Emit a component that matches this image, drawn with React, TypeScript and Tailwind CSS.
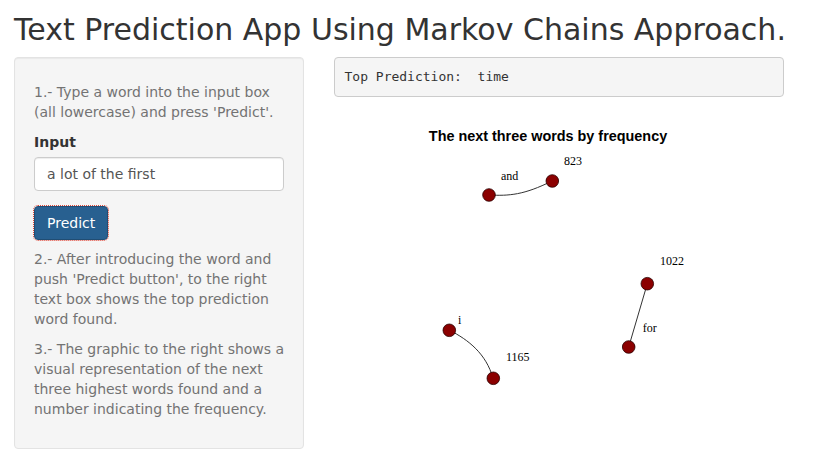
import React from 'react';

const STEPS = {
  one: "1.- Type a word into the input box (all lowercase) and press 'Predict'.",
  two: "2.- After introducing the word and push 'Predict button', to the right text box shows the top prediction word found.",
  three: '3.- The graphic to the right shows a visual representation of the next three highest words found and a number indicating the frequency.',
};

function Node({ x, y }: { x: number; y: number }) {
  return <circle cx={x} cy={y} r={6.3} fill="#8b0000" stroke="#2a0000" strokeWidth={0.8} />;
}

function Label({ x, y, children }: { x: number; y: number; children: React.ReactNode }) {
  return (
    <text x={x} y={y} fontSize={12} fill="#000" style={{ fontFamily: '"Liberation Serif", serif' }}>
      {children}
    </text>
  );
}

// word graph, drawn as the plot image
function FreqPlot() {
  return (
    <svg width={450} height={400} viewBox="0 0 450 400" className="block">
      <text
        x={214}
        y={34}
        textAnchor="middle"
        fontSize={14.4}
        fontWeight={700}
        fill="#000"
        style={{ fontFamily: '"Liberation Sans", Arial, sans-serif' }}
      >
        The next three words by frequency
      </text>

      <g fill="none" stroke="#333" strokeWidth={1}>
        <path d="M155,88 C175,89 190,88 218,74" />
        <path d="M313.3,176.7 L294.7,240" />
        <path d="M115,223 C135,233 152,247 159,271" />
      </g>

      <Node x={155} y={88} />
      <Node x={218.3} y={74} />
      <Node x={313.3} y={176.7} />
      <Node x={294.7} y={240} />
      <Node x={115.3} y={223.3} />
      <Node x={159.3} y={271.3} />

      <Label x={167} y={73.3}>and</Label>
      <Label x={230} y={58}>823</Label>
      <Label x={326} y={158}>1022</Label>
      <Label x={308.7} y={224.7}>for</Label>
      <Label x={124} y={217}>i</Label>
      <Label x={172} y={254}>1165</Label>
    </svg>
  );
}

export default function App() {
  return (
    <div className="min-h-[464px] bg-white px-[14px] text-[14px] leading-[20px] text-[#333]" style={{ fontFamily: '"DejaVu Sans", sans-serif' }}>
      <h2 className="mb-[11px] pt-[13px] text-[30px] leading-[33px] font-normal">
        Text Prediction App Using Markov Chains Approach.
      </h2>

      <div className="flex items-start gap-[30px]">
        {/* Sidebar */}
        <div className="w-[290px] shrink-0 rounded border border-[#e3e3e3] bg-[#f5f5f5] p-[19px] shadow-[inset_0_1px_1px_rgba(0,0,0,0.05)]">
          <span className="-mr-[4px] mt-[5px] mb-[10px] block text-[#737373]">{STEPS.one}</span>
          <div className="mb-[15px]">
            <label className="mb-[5px] inline-block font-bold">Input</label>
            <input
              readOnly
              value="a lot of the first"
              className="block h-[34px] w-full rounded border border-[#ccc] bg-white px-[12px] py-[6px] text-[14px] text-[#555] shadow-[inset_0_1px_1px_rgba(0,0,0,0.075)] outline-none"
            />
          </div>
          <div className="h-[38px]">
            <button className="h-[34px] rounded border border-[#204d74] bg-[#286090] px-[12px] py-[6px] text-[14px] text-white outline-1 outline-dotted outline-[#e0483a]">
              Predict
            </button>
          </div>
          <span className="-mr-[4px] mt-[5px] mb-[10px] block text-[#737373]">{STEPS.two}</span>
          <span className="-mr-[4px] mt-[5px] mb-[10px] block text-[#737373]">{STEPS.three}</span>
        </div>

        {/* Main panel */}
        <div className="w-[450px] shrink-0">
          <pre
            className="mb-[10px] rounded border border-[#ccc] bg-[#f5f5f5] p-[9.5px] text-[13px] leading-[18.57px] text-[#333]"
            style={{ fontFamily: '"DejaVu Sans Mono", monospace' }}
          >
            {'Top Prediction:  time'}
          </pre>
          <FreqPlot />
        </div>
      </div>
    </div>
  );
}
